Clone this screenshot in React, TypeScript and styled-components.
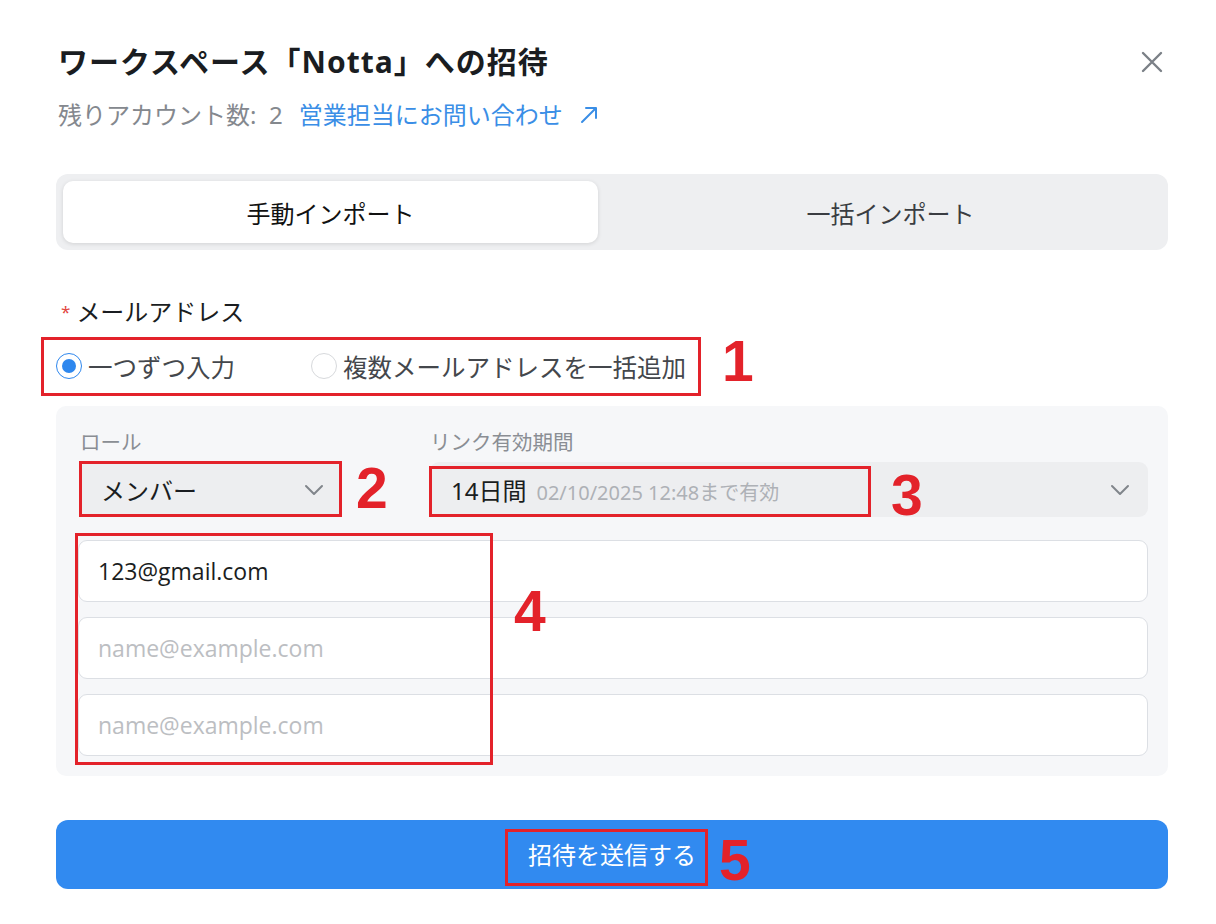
import React from 'react';
import styled, { createGlobalStyle } from 'styled-components';

const GlobalStyle = createGlobalStyle`
  html, body {
    margin: 0;
    padding: 0;
    background: #ffffff;
  }
  body {
    font-family: "Noto Sans", "Noto Sans CJK JP", sans-serif;
    color: #1f2329;
  }
`;

const Modal = styled.div`
  width: 1216px;
  height: 924px;
  box-sizing: border-box;
  padding: 41px 44px 0 56px;
  background: #fff;
  display: flex;
  flex-direction: column;
`;

const HeaderRow = styled.div`
  display: flex;
  align-items: center;
  justify-content: space-between;
`;

const Title = styled.h1`
  margin: 0 0 0 2px;
  font-size: 30px;
  line-height: 42px;
  font-weight: 700;
  color: #1a1d21;
  letter-spacing: 1px;
`;

const CloseButton = styled.button`
  border: none;
  background: none;
  padding: 0;
  width: 40px;
  height: 40px;
  display: flex;
  align-items: center;
  justify-content: center;
  cursor: pointer;
`;

const Subtitle = styled.div`
  margin: 16px 0 0 2px;
  font-size: 24px;
  line-height: 32px;
  color: #84888e;
  display: flex;
  align-items: center;
  gap: 16px;
`;

const Link = styled.a`
  color: #3a8ee6;
  text-decoration: none;
  display: inline-flex;
  align-items: center;
  gap: 17px;
`;

const Body = styled.div`
  width: 1112px;
  display: flex;
  flex-direction: column;
`;

const Tabs = styled.div`
  margin-top: 43px;
  height: 76px;
  box-sizing: border-box;
  padding: 7px;
  background: #eeeff1;
  border-radius: 12px;
  display: grid;
  grid-template-columns: 535px 1fr;
`;

const Tab = styled.div<{ $active?: boolean }>`
  display: flex;
  align-items: center;
  justify-content: center;
  font-size: 24px;
  color: ${(p) => (p.$active ? '#111' : '#3a3d42')};
  background: ${(p) => (p.$active ? '#fff' : 'transparent')};
  border-radius: 10px;
  padding-left: ${(p) => (p.$active ? '0' : '22px')};
  box-shadow: ${(p) => (p.$active ? '0 1px 4px rgba(0,0,0,0.12)' : 'none')};
`;

const FieldLabel = styled.div`
  margin-top: 47px;
  font-size: 24px;
  line-height: 30px;
  color: #1a1d21;
  display: flex;
  align-items: center;
  padding-left: 5px;
`;

const Required = styled.span`
  color: #e2473f;
  font-size: 17px;
  margin-right: 6px;
`;

const RadioRow = styled.div`
  margin-top: 24px;
  display: flex;
  align-items: center;
  height: 30px;
`;

const RadioOption = styled.label<{ $last?: boolean }>`
  display: inline-flex;
  align-items: center;
  gap: 6px;
  font-size: 24.5px;
  color: #44474c;
  margin-right: ${(p) => (p.$last ? '0' : '76px')};
  cursor: pointer;
`;

const RadioCircle = styled.span<{ $checked?: boolean }>`
  width: 26px;
  height: 26px;
  box-sizing: border-box;
  border-radius: 50%;
  border: 1.5px solid ${(p) => (p.$checked ? '#2e87ee' : '#d7d9dc')};
  background: #fff;
  display: flex;
  align-items: center;
  justify-content: center;
  &::after {
    content: '';
    width: 14px;
    height: 14px;
    border-radius: 50%;
    background: ${(p) => (p.$checked ? '#2e87ee' : 'transparent')};
  }
`;

const Panel = styled.div`
  margin-top: 25px;
  background: #f6f7f9;
  border-radius: 10px;
  padding: 23px 20px 20px 22px;
  display: flex;
  flex-direction: column;
`;

const SelectRow = styled.div`
  display: flex;
  gap: 88px;
  padding-left: 2px;
`;

const SelectCol = styled.div<{ $grow?: boolean }>`
  display: flex;
  flex-direction: column;
  gap: 7px;
  width: ${(p) => (p.$grow ? 'auto' : '262px')};
  flex: ${(p) => (p.$grow ? 1 : 'none')};
`;

const SmallLabel = styled.div`
  font-size: 20.5px;
  line-height: 26px;
  color: #8a8e94;
`;

const Select = styled.div`
  height: 55px;
  box-sizing: border-box;
  background: #edeef0;
  border-radius: 9px;
  padding: 0 18px 0 21px;
  display: flex;
  align-items: center;
  justify-content: space-between;
`;

const SelectValue = styled.span`
  font-size: 24px;
  color: #1a1d21;
  display: inline-flex;
  align-items: baseline;
  gap: 10px;
`;

const SelectHint = styled.span`
  font-size: 20px;
  color: #aeb1b6;
`;

const Inputs = styled.div`
  margin-top: 23px;
  display: flex;
  flex-direction: column;
  gap: 15px;
`;

const EmailInput = styled.input`
  height: 62px;
  box-sizing: border-box;
  border: 1px solid #dcdfe4;
  border-radius: 9px;
  background: #fff;
  padding: 0 19px;
  font-family: "Open Sans", "Noto Sans CJK JP", sans-serif;
  font-size: 23px;
  color: #1a1d21;
  outline: none;
  &::placeholder {
    color: #bcbec2;
  }
`;

const SubmitButton = styled.button`
  margin-top: 44px;
  height: 69px;
  border: none;
  border-radius: 12px;
  background: #318af0;
  color: #fff;
  font-family: "Noto Sans", "Noto Sans CJK JP", sans-serif;
  font-size: 24px;
  line-height: 34px;
  display: flex;
  align-items: center;
  justify-content: center;
  cursor: pointer;
`;

// red annotation boxes laid over the screenshot
const Mark = styled.div<{ $block?: boolean }>`
  position: relative;
  display: ${(p) => (p.$block ? 'flex' : 'inline-flex')};
  flex-direction: ${(p) => (p.$block ? 'column' : 'row')};
`;

const MarkBox = styled.span<{ $t: number; $r: number; $b: number; $l: number }>`
  position: absolute;
  top: ${(p) => p.$t}px;
  right: ${(p) => p.$r}px;
  bottom: ${(p) => p.$b}px;
  left: ${(p) => p.$l}px;
  border: 3px solid #e3222a;
  pointer-events: none;
`;

const MarkNum = styled.span<{ $x: number; $y: number }>`
  position: absolute;
  left: ${(p) => p.$x}px;
  top: ${(p) => p.$y}px;
  font-family: "Liberation Sans", Arial, sans-serif;
  font-weight: 700;
  font-size: 57px;
  line-height: 1;
  color: #e3222a;
  pointer-events: none;
`;

const Chevron = () => (
  <svg width="20" height="12" viewBox="0 0 20 12" fill="none">
    <path d="M2 2l8 8 8-8" stroke="#80858b" strokeWidth="2" strokeLinecap="round" strokeLinejoin="round" />
  </svg>
);

const App: React.FC = () => {
  return (
    <>
      <GlobalStyle />
      <Modal>
        <HeaderRow>
          <Title>ワークスペース「Notta」への招待</Title>
          <CloseButton aria-label="close">
            <svg width="24" height="24" viewBox="0 0 24 24" fill="none">
              <path d="M3 3l18 18M21 3L3 21" stroke="#7b8087" strokeWidth="2.4" strokeLinecap="round" />
            </svg>
          </CloseButton>
        </HeaderRow>
        <Subtitle>
          <span>残りアカウント数:&nbsp;&nbsp;2</span>
          <Link href="#">
            営業担当にお問い合わせ
            <svg width="18" height="18" viewBox="0 0 18 18" fill="none">
              <path d="M2 16L16 2M6 2h10v10" stroke="#3a8ee6" strokeWidth="2" strokeLinecap="round" strokeLinejoin="round" />
            </svg>
          </Link>
        </Subtitle>

        <Body>
          <Tabs>
            <Tab $active>手動インポート</Tab>
            <Tab>一括インポート</Tab>
          </Tabs>

          <FieldLabel>
            <Required>*</Required>メールアドレス
          </FieldLabel>

          <RadioRow>
            <Mark>
              <RadioOption>
                <RadioCircle $checked />
                一つずつ入力
              </RadioOption>
              <RadioOption $last>
                <RadioCircle />
                複数メールアドレスを一括追加
              </RadioOption>
              <MarkBox $t={-12} $r={-15} $b={-12} $l={-15} />
              <MarkNum $x={666} $y={-16}>1</MarkNum>
            </Mark>
          </RadioRow>

          <Panel>
            <SelectRow>
              <SelectCol>
                <SmallLabel>ロール</SmallLabel>
                <Mark $block>
                  <Select>
                    <SelectValue>メンバー</SelectValue>
                    <Chevron />
                  </Select>
                  <MarkBox $t={-1} $r={0} $b={0} $l={-1} />
                  <MarkNum $x={276} $y={-2}>2</MarkNum>
                </Mark>
              </SelectCol>
              <SelectCol $grow>
                <SmallLabel>リンク有効期間</SmallLabel>
                <Mark $block>
                  <Select>
                    <SelectValue>
                      14日間<SelectHint>02/10/2025 12:48まで有効</SelectHint>
                    </SelectValue>
                    <Chevron />
                  </Select>
                  <MarkBox $t={4} $r={277} $b={0} $l={-1} />
                  <MarkNum $x={461} $y={5}>3</MarkNum>
                </Mark>
              </SelectCol>
            </SelectRow>

            <Mark $block>
              <Inputs>
                <EmailInput defaultValue="123@gmail.com" />
                <EmailInput placeholder="name@example.com" />
                <EmailInput placeholder="name@example.com" />
              </Inputs>
              <MarkBox $t={16} $r={655} $b={-9} $l={-3} />
              <MarkNum $x={436} $y={66}>4</MarkNum>
            </Mark>
          </Panel>

          <SubmitButton>
            <Mark>
              招待を送信する
              <MarkBox $t={-9} $r={-12} $b={-14} $l={-23} />
              <MarkNum $x={191} $y={-6}>5</MarkNum>
            </Mark>
          </SubmitButton>
        </Body>
      </Modal>
    </>
  );
};

export default App;
